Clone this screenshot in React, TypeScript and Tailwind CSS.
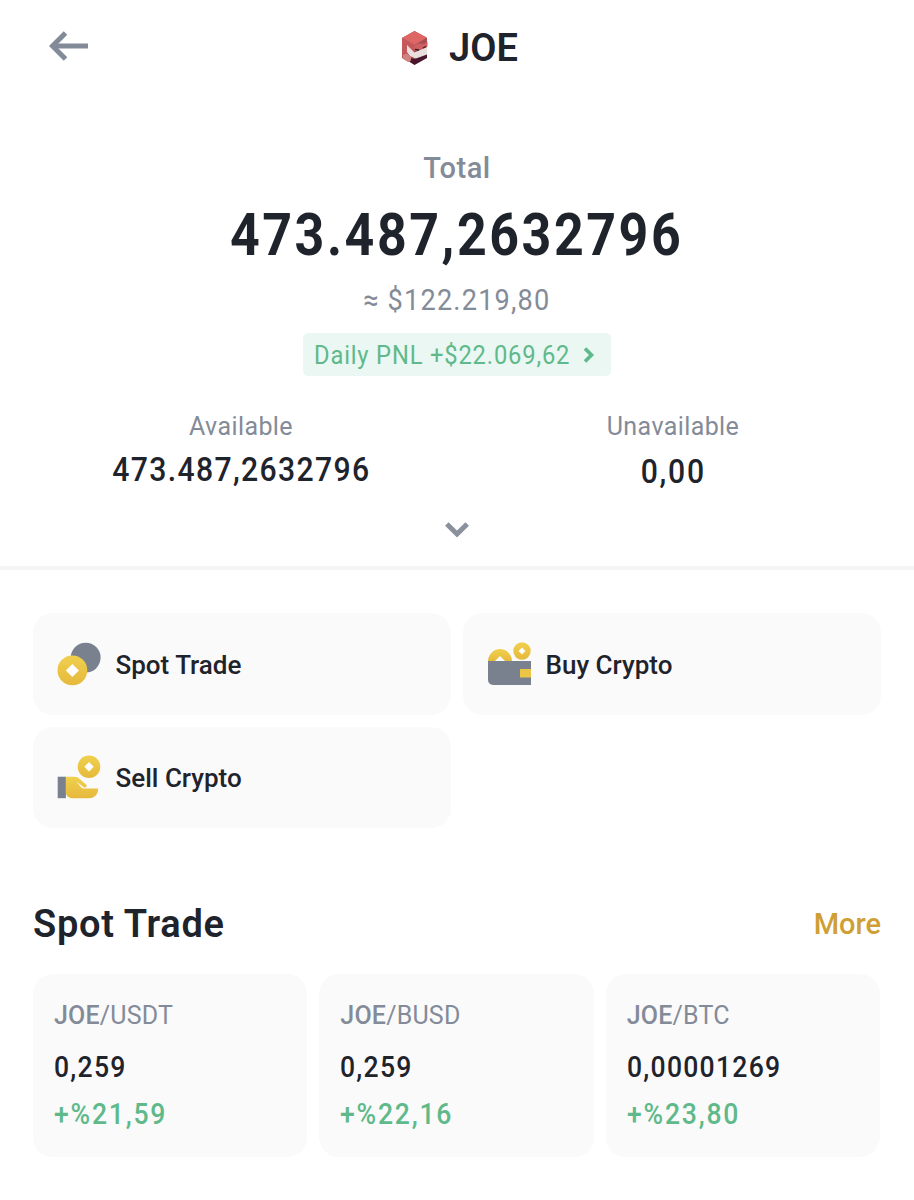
import type { ReactNode } from 'react';

const ACTIONS = [
  { label: 'Spot Trade', icon: <SpotIcon /> },
  { label: 'Buy Crypto', icon: <BuyIcon /> },
  { label: 'Sell Crypto', icon: <SellIcon /> },
];

const PAIRS = [
  { quote: 'USDT', price: '0,259', change: '+%21,59' },
  { quote: 'BUSD', price: '0,259', change: '+%22,16' },
  { quote: 'BTC', price: '0,00001269', change: '+%23,80' },
];

function GoldGradient({ id }: { id: string }) {
  return (
    <defs>
      <linearGradient id={id} x1="0" y1="0" x2="0" y2="1">
        <stop offset="0" stopColor="#f0d04e" />
        <stop offset="1" stopColor="#e6b93c" />
      </linearGradient>
    </defs>
  );
}

function SpotIcon() {
  return (
    <svg width="44" height="44" viewBox="0 0 44 44">
      <GoldGradient id="spot-gold" />
      <circle cx="28.7" cy="15.6" r="14.9" fill="#79818f" />
      <circle cx="15.4" cy="28.4" r="14.9" fill="url(#spot-gold)" />
      <path d="M15.4 21.9l6.5 6.5-6.5 6.5-6.5-6.5z" fill="#fff" />
    </svg>
  );
}

function BuyIcon() {
  return (
    <svg width="44" height="44" viewBox="0 0 44 44">
      <GoldGradient id="buy-gold" />
      <path d="M1 19.500a12 12.500 0 0 1 24 0z" fill="url(#buy-gold)" />
      <path d="M13 14l5.500 5.500h-11z" fill="#fafafa" />
      <circle cx="35" cy="9" r="8.7" fill="url(#buy-gold)" />
      <path d="M35 5.600l3.400 3.400-3.400 3.400-3.400-3.400z" fill="#fff" />
      <path d="M1 19h43v24H6a5 5 0 0 1-5-5z" fill="#79818f" />
      <path d="M33 27h11v8.500H33z" fill="#ebc546" />
    </svg>
  );
}

function SellIcon() {
  return (
    <svg width="44" height="44" viewBox="0 0 44 44">
      <GoldGradient id="sell-gold" />
      <circle cx="32" cy="11.800" r="11.300" fill="url(#sell-gold)" />
      <path d="M32 7.100l4.700 4.700-4.700 4.700-4.700-4.700z" fill="#fff" />
      <path d="M.7 21.700h8.200v21.500H.7z" fill="#79818f" />
      <path
        d="M8.900 21.700H17c2.600 0 4.200.7 6 2.500l6 5.400c1.300 1.300.6 2.900-.9 2.900-.9 0-1.500-.3-2.300-1L19.500 26.500l4.300 5.600c1 1.100 2 1.500 3.500 1.500h13.900c0 5.700-3.500 9.600-9 9.600H16c-4.200 0-7.100-2.200-7.100-6z"
        fill="url(#sell-gold)"
      />
    </svg>
  );
}

function JoeLogo() {
  return (
    <svg width="28" height="36" viewBox="0 0 28 36">
      {/* head */}
      <path d="M13.500 1L26 8v19l-12.500 7.500L1 28V8z" fill="#a84e55" />
      <path d="M13.500 1L26 7.500 13.500 15 1 8z" fill="#dc6765" />
      <path d="M1 8l12.500 7v6L6 17v13l-5-3z" fill="#c4585b" />
      {/* face and beard */}
      <path d="M6 15l7.500 7.500L26 17v9l-9 3.500-8-3.500-3-4z" fill="#e9dfdf" />
      <path d="M12.500 16l5-2.500 5.500.5 3.500-2.500v5L20 19l-6 2z" fill="#cf5f60" />
      <path d="M14 19.500l4 .5M22 18l3-1.500" stroke="#3c2229" strokeWidth="1.300" />
      {/* collar and paw */}
      <path d="M13.500 29L26 24.500V28l-12.500 7L9 32v-4z" fill="#48162d" />
      <path d="M2 25l4-1.500 4 3v4L7 32l-5-3z" fill="#cf8380" />
    </svg>
  );
}

function Balance({ label, children }: { label: string; children: ReactNode }) {
  return (
    <div className="flex w-[432px] flex-col items-center">
      <span className="text-[25px] leading-[32px] tracking-[0.4px] text-[#848b98]">{label}</span>
      {children}
    </div>
  );
}

export default function App() {
  return (
    <main className="h-[1200px] w-[914px] overflow-hidden bg-white font-['Roboto',sans-serif] text-[#1f232b]">
      <header className="grid h-[95px] grid-cols-[1fr_auto_1fr] items-center px-[49px]">
        <svg className="-mt-[3px]" width="40" height="32" viewBox="0 0 40 32" fill="none" stroke="#848b98">
          <path d="M39 16H4" strokeWidth="5" />
          <path d="M16.500 3L3.500 16l13 13" strokeWidth="5" />
        </svg>
        <div className="flex items-center pl-[5px]">
          <JoeLogo />
          <h1 className="ml-5 text-[38px] leading-[48px] font-semibold">JOE</h1>
        </div>
      </header>

      <section className="flex h-[471px] flex-col items-center pt-[53px]">
        <span className="text-[29px] leading-[40px] font-medium tracking-[0.5px] text-[#848b98]">Total</span>
        <span className="mt-[17px] scale-x-[0.88] text-[59px] leading-[60px] font-bold tracking-[2.9px]">
          473.487,2632796
        </span>
        <span className="mt-[15px] scale-x-[0.92] text-[29.5px] leading-[40px] tracking-[1.3px] text-[#848b98]">
          ≈ $122.219,80
        </span>
        <button className="mt-[13px] flex h-[43px] w-[308px] items-center rounded-[5px] bg-[#eaf7f2] pt-[2px] pl-[11px] text-[25.5px] text-[#5fb98a]">
          <span className="w-[240px] origin-left scale-x-[0.93] text-left tracking-[0.9px] whitespace-nowrap">
            Daily PNL +$22.069,62
          </span>
          <svg className="-mt-[2px] mr-[16px] ml-auto" width="12" height="16" viewBox="0 0 12 16" fill="none" stroke="currentColor">
            <path d="M2 1.500L8.500 8 2 14.500" strokeWidth="3.600" />
          </svg>
        </button>
        <div className="mt-[35px] flex h-[76px]">
          <Balance label="Available">
            <span className="mt-[11px] scale-x-90 text-[33.5px] leading-[32px] font-medium tracking-[1.5px]">
              473.487,2632796
            </span>
          </Balance>
          <Balance label="Unavailable">
            <span className="mt-[13px] scale-x-90 text-[33.5px] leading-[32px] font-medium tracking-[2px]">0,00</span>
          </Balance>
        </div>
        <svg className="mt-[35px]" width="24" height="16" viewBox="0 0 24 16" fill="none" stroke="#8a919d">
          <path d="M1.800 2L12 12l10.200-10" strokeWidth="5" />
        </svg>
      </section>

      <div className="h-1 bg-[#f5f5f5]" />

      <section className="mt-[43px] grid grid-cols-2 gap-3 px-[33px]">
        {ACTIONS.map(({ label, icon }) => (
          <button key={label} className="flex h-[101.5px] items-center rounded-[20px] bg-[#fafafa] pl-6 text-[26px] font-medium">
            {icon}
            <span className="mt-[3px] ml-[14.5px]">{label}</span>
          </button>
        ))}
      </section>

      <div className="mt-[72px] flex h-12 items-center justify-between px-[33px]">
        <h2 className="text-[38px] font-semibold tracking-[0.7px]">Spot Trade</h2>
        <a className="mt-[2px] text-[29px] font-medium text-[#cf9f35]">More</a>
      </div>

      <section className="mt-[26px] grid grid-cols-3 gap-3 pr-[34px] pl-[33px]">
        {PAIRS.map(({ quote, price, change }) => (
          <div key={quote} className="flex h-[183px] flex-col rounded-[20px] bg-[#fafafa] pt-[26px] pl-[21px]">
            <span className="text-[25px] leading-[32px] tracking-[0.2px] text-[#848b98]">
              <span className="font-medium">JOE</span>/{quote}
            </span>
            <span className="mt-[17px] origin-left scale-x-90 text-[29.5px] leading-[36px] font-medium tracking-[1.4px]">
              {price}
            </span>
            <span className="mt-[11px] origin-left scale-x-90 text-[29.5px] leading-[36px] font-medium tracking-[2px] text-[#5fb98a]">
              {change}
            </span>
          </div>
        ))}
      </section>
    </main>
  );
}
